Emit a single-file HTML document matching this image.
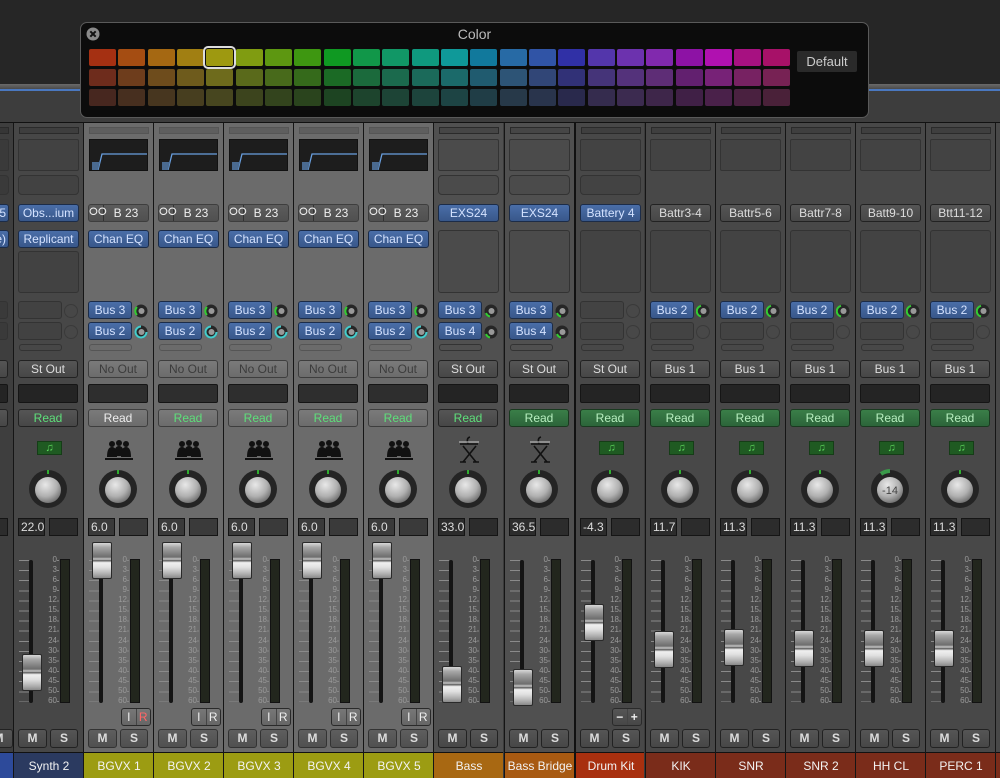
<!DOCTYPE html>
<html><head><meta charset="utf-8"><style>
*{box-sizing:border-box;margin:0;padding:0}
body{width:1000px;height:778px;overflow:hidden;background:#3b3b3b;font-family:"Liberation Sans",sans-serif;position:relative}
.top{position:absolute;left:0;top:0;width:1000px;height:84px;background:#262626}
.band{position:absolute;left:0;top:84px;width:1000px;height:39px;background:#3d3d3d;border-bottom:1px solid #111}
.band:before{content:"";position:absolute;left:0;top:0;width:100%;height:5px;background:linear-gradient(#6a6a6a,#4a4a4a)}
.band:after{content:"";position:absolute;left:0;top:5px;width:100%;height:2px;background:#4a78c0}
.st{position:absolute;top:123px;width:70px;height:655px;border-left:1px solid #151515;overflow:hidden}
.st>*{position:absolute}
.slot{left:5px;top:4px;width:60px;height:7px;border:1px solid #2a2a2a;background:rgba(0,0,0,.12)}
.eq{left:5px;top:16px;width:59px;height:32px;background:#1d1d1d;border:1px solid #111}
.eb{left:4px;top:16px;width:61px;height:32px;border:1px solid #333;border-radius:2px;background:rgba(0,0,0,.06)}
.mb{left:4px;top:52px;width:61px;height:20px;border:1px solid #333;border-radius:4px;background:rgba(0,0,0,.06)}
.ia{left:4px;top:128px;width:61px;height:42px;border:1px solid #333;border-radius:3px;background:rgba(0,0,0,.06)}
.ia2{left:4px;top:107px;width:61px;height:63px;border:1px solid #333;border-radius:3px;background:rgba(0,0,0,.06)}
.b{height:18px;border-radius:3px;font-size:12px;line-height:16px;text-align:center;white-space:nowrap;overflow:hidden;border:1px solid #222;background:linear-gradient(#555,#474747);color:#ddd}
.bl{background:linear-gradient(#4a6ea8,#38578a);color:#d4e2ff;border-color:#1c2c48}
.lt .b{background:linear-gradient(#7a7a7a,#6c6c6c);border-color:#3e3e3e;color:#3c3c3c}
.lt .bl{background:linear-gradient(#4a6ea8,#38578a);color:#d4e2ff;border-color:#1c2c48}
.in{left:4px;top:81px;width:61px}
.ins{left:4px;top:107px;width:61px}
.s1{left:4px;top:178px;width:44px}
.s2{left:4px;top:199px;width:44px}
.se{border:1px solid #333;border-radius:3px;background:rgba(0,0,0,.06);height:18px;width:44px;left:4px}
.sk1{left:50px;top:181px}.sk2{left:50px;top:202px}
.ssl{left:5px;top:221px;width:43px;height:7px;border:1px solid #333;border-radius:3px}
.out{left:4px;top:237px;width:60px}
.grp{left:4px;top:261px;width:60px;height:19px;background:#242424;border:1px solid #151515;border-radius:2px}
.lt .grp{background:#2e2e2e}
.rd{left:4px;top:286px;width:60px;color:#5ee07a!important}
.rw{left:4px;top:286px;width:60px;color:#eee!important}
.rf{left:4px;top:286px;width:60px;background:linear-gradient(#3a7e48,#2c653a)!important;color:#b8f0c0!important;border-color:#1a3a20!important}
.note{left:23px;top:318px;width:25px;height:14px;background:#1f5a22;border:1px solid #153d17;color:#5cd65c;font-size:11px;line-height:12px;text-align:center}
.kn{left:14px;top:346px}
.v1{left:4px;top:395px;width:27px;height:18px;background:#2c2c2c;border:1px solid #151515;color:#ddd;font-size:12px;line-height:16px;padding-left:2px}
.v2{left:35px;top:395px;width:29px;height:18px;background:#2c2c2c;border:1px solid #151515}
.lt .v1,.lt .v2{background:#3a3a3a}
.tk{left:5px;top:437px;width:10px;height:142px;background:repeating-linear-gradient(#8a8a8a 0 1px,transparent 1px 10.1px)}
.tk2{left:11px;top:442px;width:4px;height:142px;background:repeating-linear-gradient(#777 0 1px,transparent 1px 5px)}
.tr{left:15px;top:437px;width:4px;height:143px;background:#141414;border-radius:2px}
.sc{left:27px;top:432px;width:16px;font-size:8px;line-height:10.07px;text-align:right;color:#9a9a9a}
.sct{left:43px;top:437px;width:2px;height:142px;background:repeating-linear-gradient(#888 0 1px,transparent 1px 10.07px)}
.mt{left:46px;top:436px;width:10px;height:144px;background:#22261d;border:1px solid #121212}
.cap{left:8px;width:20px;height:37px;border-radius:2px;background:linear-gradient(#d8d8d8 0%,#a8a8a8 12%,#8c8c8c 25%,#6e6e6e 40%,#c8c8c8 46%,#5a5a5a 50%,#f0f0f0 56%,#e0e0e0 70%,#b0b0b0 88%,#8a8a8a 100%);border:1px solid #2a2a2a}
.ir{left:37px;top:585px;width:30px;height:18px;border-radius:3px;border:1px solid #2a2a2a;background:linear-gradient(#777,#666);font-size:12px;line-height:16px;color:#222;display:flex}
.ir span{flex:1;text-align:center;color:#eee}
.ir span+span{border-left:1px solid #444}
.m{left:4px;top:606px;width:29px;height:19px;font-size:12px;line-height:17px;font-weight:bold}
.sb{left:36px;top:606px;width:28px;height:19px;font-size:12px;line-height:17px;font-weight:bold}
.lt .m,.lt .sb{background:linear-gradient(#5e5e5e,#505050);color:#ddd;border-color:#333}
.nm{left:0;top:629px;width:70px;height:26px;color:#f2f2f2;font-size:12px;line-height:26px;text-align:center;border-top:1px solid #111}
.pop{position:absolute;left:80px;top:22px;width:789px;height:96px;background:#0c0c0c;border:1px solid #5a5a5a;border-radius:7px;z-index:5}
.pop .t{position:absolute;left:0;width:100%;top:3px;text-align:center;color:#bbb;font-size:14px}
.sw{position:absolute;width:27px;height:17px;border-radius:2px}
.def{position:absolute;left:716px;top:28px;width:60px;height:21px;background:#2a2a2a;color:#ccc;font-size:13px;line-height:21px;text-align:center;border-radius:2px}
</style></head><body>
<svg width="0" height="0" style="position:absolute"><defs>
<radialGradient id="kg" cx="40%" cy="30%" r="75%"><stop offset="0" stop-color="#e8e8e8"/><stop offset=".6" stop-color="#b0b0b0"/><stop offset="1" stop-color="#6a6a6a"/></radialGradient>
</defs></svg>
<div class="top"></div><div class="band"></div>

<div class="pop">
<div class="t">Color</div>
<svg style="position:absolute;left:5px;top:4px" width="14" height="14"><circle cx="7" cy="7" r="6.5" fill="#8a8a8a"/><path d="M4.3 4.3L9.7 9.7M9.7 4.3L4.3 9.7" stroke="#111" stroke-width="2"/></svg>
<div id="sws"></div>
<div class="def">Default</div>
</div>

<!-- partial strip -->
<div class="st" style="left:-57px;background:#3e3e3e">
<div class="slot"></div><div class="eb"></div><div class="mb"></div>
<div class="b bl in" style="text-align:right;padding-right:2px">EXS25</div>
<div class="b bl ins" style="text-align:right;padding-right:2px">Sculpture)</div>
<div class="se" style="top:178px;left:20px"></div><div class="se" style="top:199px;left:20px"></div>
<div class="b out">St Out</div><div class="grp"></div><div class="b rd">Read</div>
<div class="v1"></div><div class="v2"></div><div class="mt"></div>
<div class="b m" style="left:40px">M</div>
<div class="nm" style="background:#2d4a9a"></div>
</div>

<!-- Synth 2 -->
<div class="st" style="left:13px;background:#474747">
<div class="slot"></div><div class="eb"></div><div class="mb"></div>
<div class="b bl in">Obs...ium</div><div class="b bl ins">Replicant</div><div class="ia"></div>
<div class="se" style="top:178px"></div><div class="se" style="top:199px"></div>
<svg class="sk1" width="14" height="14"><circle cx="7" cy="7" r="6.5" fill="none" stroke="#3a3a3a"/></svg>
<svg class="sk2" width="14" height="14"><circle cx="7" cy="7" r="6.5" fill="none" stroke="#3a3a3a"/></svg>
<div class="ssl"></div>
<div class="b out">St Out</div><div class="grp"></div><div class="b rd">Read</div>
<div class="note">♫</div>
<svg class="kn" width="40" height="40"><circle cx="20" cy="20" r="19" fill="#242424"/><circle cx="20" cy="21" r="13" fill="url(#kg)"/><line x1="20" y1="1" x2="20" y2="5" stroke="#3d3" stroke-width="1.5"/></svg>
<div class="v1">22.0</div><div class="v2"></div>
<div class="tk"></div><div class="tr"></div>
<div class="sc">0<br>3<br>6<br>9<br>12<br>15<br>18<br>21<br>24<br>30<br>35<br>40<br>45<br>50<br>60</div>
<div class="sct"></div><div class="mt"></div><div class="cap" style="top:531px"></div>
<div class="b m">M</div><div class="b sb">S</div>
<div class="nm" style="background:#2b3a60">Synth 2</div>
</div>

<!-- BGVX 1-5 -->
<div class="st lt" style="left:83px;background:#6b6b6b">
<div class="slot" style="border-color:#555"></div>
<svg class="eq" width="59" height="32"><path d="M2 30 L8 30 L12 14 L57 14" fill="none" stroke="#6aa0e0" stroke-width="1.3"/><path d="M2 30 L2 22 L10 22 L8 30Z" fill="#4a6a90"/></svg>
<div class="b in" style="display:flex;padding:0;background:linear-gradient(#5c5c5c,#505050);color:#eee"><span style="width:15px;border-right:1px solid #333;font-size:10px">ⵔⵔ</span><span style="flex:1">B 23</span></div>
<div class="b bl ins">Chan EQ</div>
<div class="b bl s1">Bus 3</div><div class="b bl s2">Bus 2</div>
<svg class="sk1" width="14" height="14"><circle cx="7" cy="7" r="6.5" fill="#262626"/><path d="M3 11A5.5 5.5 0 0 1 3 3" fill="none" stroke="#3c3" stroke-width="2"/><circle cx="7.5" cy="7" r="3" fill="#999"/></svg>
<svg class="sk2" width="14" height="14"><circle cx="7" cy="7" r="6.5" fill="#262626"/><path d="M7 1.5A5.5 5.5 0 1 0 12.5 7" fill="none" stroke="#4cc" stroke-width="2"/><circle cx="7.5" cy="7" r="3" fill="#999"/></svg>
<div class="ssl" style="border-color:#555"></div>
<div class="b out">No Out</div><div class="grp"></div><div class="b rw">Read</div>
<svg style="left:20px;top:316px" width="30" height="24"><g fill="#111"><circle cx="8" cy="5" r="3"/><circle cx="15" cy="4" r="3"/><circle cx="22" cy="5" r="3"/><path d="M3 18 Q3 8 8 8 Q13 8 13 18Z M10 17 Q10 7 15 7 Q20 7 20 17Z M17 18 Q17 8 22 8 Q27 8 27 18Z"/><rect x="1" y="19" width="28" height="2"/></g></svg>
<svg class="kn" width="40" height="40"><circle cx="20" cy="20" r="19" fill="#242424"/><circle cx="20" cy="21" r="13" fill="url(#kg)"/><line x1="20" y1="1" x2="20" y2="5" stroke="#3d3" stroke-width="1.5"/></svg>
<div class="v1">6.0</div><div class="v2"></div>
<div class="tk"></div><div class="tr"></div>
<div class="sc">0<br>3<br>6<br>9<br>12<br>15<br>18<br>21<br>24<br>30<br>35<br>40<br>45<br>50<br>60</div>
<div class="sct"></div><div class="mt"></div><div class="cap" style="top:419px"></div>
<div class="ir"><span>I</span><span style="color:#f66">R</span></div>
<div class="b m">M</div><div class="b sb">S</div>
<div class="nm" style="background:#9c9c12">BGVX 1</div>
</div>

<div class="st lt" style="left:153px;background:#6b6b6b">
<div class="slot" style="border-color:#555"></div>
<svg class="eq" width="59" height="32"><path d="M2 30 L8 30 L12 14 L57 14" fill="none" stroke="#6aa0e0" stroke-width="1.3"/><path d="M2 30 L2 22 L10 22 L8 30Z" fill="#4a6a90"/></svg>
<div class="b in" style="display:flex;padding:0;background:linear-gradient(#5c5c5c,#505050);color:#eee"><span style="width:15px;border-right:1px solid #333;font-size:10px">ⵔⵔ</span><span style="flex:1">B 23</span></div>
<div class="b bl ins">Chan EQ</div>
<div class="b bl s1">Bus 3</div><div class="b bl s2">Bus 2</div>
<svg class="sk1" width="14" height="14"><circle cx="7" cy="7" r="6.5" fill="#262626"/><path d="M3 11A5.5 5.5 0 0 1 3 3" fill="none" stroke="#3c3" stroke-width="2"/><circle cx="7.5" cy="7" r="3" fill="#999"/></svg>
<svg class="sk2" width="14" height="14"><circle cx="7" cy="7" r="6.5" fill="#262626"/><path d="M7 1.5A5.5 5.5 0 1 0 12.5 7" fill="none" stroke="#4cc" stroke-width="2"/><circle cx="7.5" cy="7" r="3" fill="#999"/></svg>
<div class="ssl" style="border-color:#555"></div>
<div class="b out">No Out</div><div class="grp"></div><div class="b rd">Read</div>
<svg style="left:20px;top:316px" width="30" height="24"><g fill="#111"><circle cx="8" cy="5" r="3"/><circle cx="15" cy="4" r="3"/><circle cx="22" cy="5" r="3"/><path d="M3 18 Q3 8 8 8 Q13 8 13 18Z M10 17 Q10 7 15 7 Q20 7 20 17Z M17 18 Q17 8 22 8 Q27 8 27 18Z"/><rect x="1" y="19" width="28" height="2"/></g></svg>
<svg class="kn" width="40" height="40"><circle cx="20" cy="20" r="19" fill="#242424"/><circle cx="20" cy="21" r="13" fill="url(#kg)"/><line x1="20" y1="1" x2="20" y2="5" stroke="#3d3" stroke-width="1.5"/></svg>
<div class="v1">6.0</div><div class="v2"></div>
<div class="tk"></div><div class="tr"></div>
<div class="sc">0<br>3<br>6<br>9<br>12<br>15<br>18<br>21<br>24<br>30<br>35<br>40<br>45<br>50<br>60</div>
<div class="sct"></div><div class="mt"></div><div class="cap" style="top:419px"></div>
<div class="ir"><span>I</span><span>R</span></div>
<div class="b m">M</div><div class="b sb">S</div>
<div class="nm" style="background:#9c9c12">BGVX 2</div>
</div>

<div class="st lt" style="left:223px;background:#6b6b6b">
<div class="slot" style="border-color:#555"></div>
<svg class="eq" width="59" height="32"><path d="M2 30 L8 30 L12 14 L57 14" fill="none" stroke="#6aa0e0" stroke-width="1.3"/><path d="M2 30 L2 22 L10 22 L8 30Z" fill="#4a6a90"/></svg>
<div class="b in" style="display:flex;padding:0;background:linear-gradient(#5c5c5c,#505050);color:#eee"><span style="width:15px;border-right:1px solid #333;font-size:10px">ⵔⵔ</span><span style="flex:1">B 23</span></div>
<div class="b bl ins">Chan EQ</div>
<div class="b bl s1">Bus 3</div><div class="b bl s2">Bus 2</div>
<svg class="sk1" width="14" height="14"><circle cx="7" cy="7" r="6.5" fill="#262626"/><path d="M3 11A5.5 5.5 0 0 1 3 3" fill="none" stroke="#3c3" stroke-width="2"/><circle cx="7.5" cy="7" r="3" fill="#999"/></svg>
<svg class="sk2" width="14" height="14"><circle cx="7" cy="7" r="6.5" fill="#262626"/><path d="M7 1.5A5.5 5.5 0 1 0 12.5 7" fill="none" stroke="#4cc" stroke-width="2"/><circle cx="7.5" cy="7" r="3" fill="#999"/></svg>
<div class="ssl" style="border-color:#555"></div>
<div class="b out">No Out</div><div class="grp"></div><div class="b rd">Read</div>
<svg style="left:20px;top:316px" width="30" height="24"><g fill="#111"><circle cx="8" cy="5" r="3"/><circle cx="15" cy="4" r="3"/><circle cx="22" cy="5" r="3"/><path d="M3 18 Q3 8 8 8 Q13 8 13 18Z M10 17 Q10 7 15 7 Q20 7 20 17Z M17 18 Q17 8 22 8 Q27 8 27 18Z"/><rect x="1" y="19" width="28" height="2"/></g></svg>
<svg class="kn" width="40" height="40"><circle cx="20" cy="20" r="19" fill="#242424"/><circle cx="20" cy="21" r="13" fill="url(#kg)"/><line x1="20" y1="1" x2="20" y2="5" stroke="#3d3" stroke-width="1.5"/></svg>
<div class="v1">6.0</div><div class="v2"></div>
<div class="tk"></div><div class="tr"></div>
<div class="sc">0<br>3<br>6<br>9<br>12<br>15<br>18<br>21<br>24<br>30<br>35<br>40<br>45<br>50<br>60</div>
<div class="sct"></div><div class="mt"></div><div class="cap" style="top:419px"></div>
<div class="ir"><span>I</span><span>R</span></div>
<div class="b m">M</div><div class="b sb">S</div>
<div class="nm" style="background:#9c9c12">BGVX 3</div>
</div>

<div class="st lt" style="left:293px;background:#6b6b6b">
<div class="slot" style="border-color:#555"></div>
<svg class="eq" width="59" height="32"><path d="M2 30 L8 30 L12 14 L57 14" fill="none" stroke="#6aa0e0" stroke-width="1.3"/><path d="M2 30 L2 22 L10 22 L8 30Z" fill="#4a6a90"/></svg>
<div class="b in" style="display:flex;padding:0;background:linear-gradient(#5c5c5c,#505050);color:#eee"><span style="width:15px;border-right:1px solid #333;font-size:10px">ⵔⵔ</span><span style="flex:1">B 23</span></div>
<div class="b bl ins">Chan EQ</div>
<div class="b bl s1">Bus 3</div><div class="b bl s2">Bus 2</div>
<svg class="sk1" width="14" height="14"><circle cx="7" cy="7" r="6.5" fill="#262626"/><path d="M3 11A5.5 5.5 0 0 1 3 3" fill="none" stroke="#3c3" stroke-width="2"/><circle cx="7.5" cy="7" r="3" fill="#999"/></svg>
<svg class="sk2" width="14" height="14"><circle cx="7" cy="7" r="6.5" fill="#262626"/><path d="M7 1.5A5.5 5.5 0 1 0 12.5 7" fill="none" stroke="#4cc" stroke-width="2"/><circle cx="7.5" cy="7" r="3" fill="#999"/></svg>
<div class="ssl" style="border-color:#555"></div>
<div class="b out">No Out</div><div class="grp"></div><div class="b rd">Read</div>
<svg style="left:20px;top:316px" width="30" height="24"><g fill="#111"><circle cx="8" cy="5" r="3"/><circle cx="15" cy="4" r="3"/><circle cx="22" cy="5" r="3"/><path d="M3 18 Q3 8 8 8 Q13 8 13 18Z M10 17 Q10 7 15 7 Q20 7 20 17Z M17 18 Q17 8 22 8 Q27 8 27 18Z"/><rect x="1" y="19" width="28" height="2"/></g></svg>
<svg class="kn" width="40" height="40"><circle cx="20" cy="20" r="19" fill="#242424"/><circle cx="20" cy="21" r="13" fill="url(#kg)"/><line x1="20" y1="1" x2="20" y2="5" stroke="#3d3" stroke-width="1.5"/></svg>
<div class="v1">6.0</div><div class="v2"></div>
<div class="tk"></div><div class="tr"></div>
<div class="sc">0<br>3<br>6<br>9<br>12<br>15<br>18<br>21<br>24<br>30<br>35<br>40<br>45<br>50<br>60</div>
<div class="sct"></div><div class="mt"></div><div class="cap" style="top:419px"></div>
<div class="ir"><span>I</span><span>R</span></div>
<div class="b m">M</div><div class="b sb">S</div>
<div class="nm" style="background:#9c9c12">BGVX 4</div>
</div>

<div class="st lt" style="left:363px;background:#6b6b6b">
<div class="slot" style="border-color:#555"></div>
<svg class="eq" width="59" height="32"><path d="M2 30 L8 30 L12 14 L57 14" fill="none" stroke="#6aa0e0" stroke-width="1.3"/><path d="M2 30 L2 22 L10 22 L8 30Z" fill="#4a6a90"/></svg>
<div class="b in" style="display:flex;padding:0;background:linear-gradient(#5c5c5c,#505050);color:#eee"><span style="width:15px;border-right:1px solid #333;font-size:10px">ⵔⵔ</span><span style="flex:1">B 23</span></div>
<div class="b bl ins">Chan EQ</div>
<div class="b bl s1">Bus 3</div><div class="b bl s2">Bus 2</div>
<svg class="sk1" width="14" height="14"><circle cx="7" cy="7" r="6.5" fill="#262626"/><path d="M3 11A5.5 5.5 0 0 1 3 3" fill="none" stroke="#3c3" stroke-width="2"/><circle cx="7.5" cy="7" r="3" fill="#999"/></svg>
<svg class="sk2" width="14" height="14"><circle cx="7" cy="7" r="6.5" fill="#262626"/><path d="M7 1.5A5.5 5.5 0 1 0 12.5 7" fill="none" stroke="#4cc" stroke-width="2"/><circle cx="7.5" cy="7" r="3" fill="#999"/></svg>
<div class="ssl" style="border-color:#555"></div>
<div class="b out">No Out</div><div class="grp"></div><div class="b rd">Read</div>
<svg style="left:20px;top:316px" width="30" height="24"><g fill="#111"><circle cx="8" cy="5" r="3"/><circle cx="15" cy="4" r="3"/><circle cx="22" cy="5" r="3"/><path d="M3 18 Q3 8 8 8 Q13 8 13 18Z M10 17 Q10 7 15 7 Q20 7 20 17Z M17 18 Q17 8 22 8 Q27 8 27 18Z"/><rect x="1" y="19" width="28" height="2"/></g></svg>
<svg class="kn" width="40" height="40"><circle cx="20" cy="20" r="19" fill="#242424"/><circle cx="20" cy="21" r="13" fill="url(#kg)"/><line x1="20" y1="1" x2="20" y2="5" stroke="#3d3" stroke-width="1.5"/></svg>
<div class="v1">6.0</div><div class="v2"></div>
<div class="tk"></div><div class="tr"></div>
<div class="sc">0<br>3<br>6<br>9<br>12<br>15<br>18<br>21<br>24<br>30<br>35<br>40<br>45<br>50<br>60</div>
<div class="sct"></div><div class="mt"></div><div class="cap" style="top:419px"></div>
<div class="ir"><span>I</span><span>R</span></div>
<div class="b m">M</div><div class="b sb">S</div>
<div class="nm" style="background:#9c9c12">BGVX 5</div>
</div>

<!-- Bass -->
<div class="st" style="left:433px;background:#505050">
<div class="slot"></div><div class="eb"></div><div class="mb"></div>
<div class="b bl in">EXS24</div><div class="ia2"></div>
<div class="b bl s1">Bus 3</div><div class="b bl s2">Bus 4</div>
<svg class="sk1" width="14" height="14"><circle cx="7" cy="7" r="6.5" fill="#262626"/><path d="M2 9A5.5 5.5 0 0 0 6 12.5" fill="none" stroke="#3c3" stroke-width="2"/><circle cx="7.5" cy="7" r="3" fill="#999"/></svg>
<svg class="sk2" width="14" height="14"><circle cx="7" cy="7" r="6.5" fill="#262626"/><path d="M2 9A5.5 5.5 0 0 0 6 12.5" fill="none" stroke="#3c3" stroke-width="2"/><circle cx="7.5" cy="7" r="3" fill="#999"/></svg>
<div class="ssl"></div>
<div class="b out">St Out</div><div class="grp"></div><div class="b rd">Read</div>
<svg style="left:22px;top:312px" width="26" height="30"><g stroke="#111" fill="none" stroke-width="1.6"><path d="M4 9 L22 9"/><path d="M7 11 L20 27 M20 11 L7 27"/><path d="M4 27 L10 27 M17 27 L23 27"/><path d="M12 9 Q10 3 14 2"/></g><path d="M3 7 L23 7" stroke="#ccc" stroke-width="1"/></svg>
<svg class="kn" width="40" height="40"><circle cx="20" cy="20" r="19" fill="#242424"/><circle cx="20" cy="21" r="13" fill="url(#kg)"/><line x1="20" y1="1" x2="20" y2="5" stroke="#3d3" stroke-width="1.5"/></svg>
<div class="v1">33.0</div><div class="v2"></div>
<div class="tk"></div><div class="tr"></div>
<div class="sc">0<br>3<br>6<br>9<br>12<br>15<br>18<br>21<br>24<br>30<br>35<br>40<br>45<br>50<br>60</div>
<div class="sct"></div><div class="mt"></div><div class="cap" style="top:543px"></div>
<div class="b m">M</div><div class="b sb">S</div>
<div class="nm" style="background:#a86812">Bass</div>
</div>

<div class="st" style="left:504px;background:#505050">
<div class="slot"></div><div class="eb"></div><div class="mb"></div>
<div class="b bl in">EXS24</div><div class="ia2"></div>
<div class="b bl s1">Bus 3</div><div class="b bl s2">Bus 4</div>
<svg class="sk1" width="14" height="14"><circle cx="7" cy="7" r="6.5" fill="#262626"/><path d="M2 9A5.5 5.5 0 0 0 6 12.5" fill="none" stroke="#3c3" stroke-width="2"/><circle cx="7.5" cy="7" r="3" fill="#999"/></svg>
<svg class="sk2" width="14" height="14"><circle cx="7" cy="7" r="6.5" fill="#262626"/><path d="M2 9A5.5 5.5 0 0 0 6 12.5" fill="none" stroke="#3c3" stroke-width="2"/><circle cx="7.5" cy="7" r="3" fill="#999"/></svg>
<div class="ssl"></div>
<div class="b out">St Out</div><div class="grp"></div><div class="b rf">Read</div>
<svg style="left:22px;top:312px" width="26" height="30"><g stroke="#111" fill="none" stroke-width="1.6"><path d="M4 9 L22 9"/><path d="M7 11 L20 27 M20 11 L7 27"/><path d="M4 27 L10 27 M17 27 L23 27"/><path d="M12 9 Q10 3 14 2"/></g><path d="M3 7 L23 7" stroke="#ccc" stroke-width="1"/></svg>
<svg class="kn" width="40" height="40"><circle cx="20" cy="20" r="19" fill="#242424"/><circle cx="20" cy="21" r="13" fill="url(#kg)"/><line x1="20" y1="1" x2="20" y2="5" stroke="#3d3" stroke-width="1.5"/></svg>
<div class="v1">36.5</div><div class="v2"></div>
<div class="tk"></div><div class="tr"></div>
<div class="sc">0<br>3<br>6<br>9<br>12<br>15<br>18<br>21<br>24<br>30<br>35<br>40<br>45<br>50<br>60</div>
<div class="sct"></div><div class="mt"></div><div class="cap" style="top:546px"></div>
<div class="b m">M</div><div class="b sb">S</div>
<div class="nm" style="background:#a85a12">Bass Bridge</div>
</div>

<!-- Drum Kit -->
<div class="st" style="left:574px;background:#484848;border-left:2px solid #111">
<div class="slot"></div><div class="eb"></div><div class="mb"></div>
<div class="b bl in">Battery 4</div><div class="ia2"></div>
<div class="se" style="top:178px"></div><div class="se" style="top:199px"></div>
<svg class="sk1" width="14" height="14"><circle cx="7" cy="7" r="6.5" fill="none" stroke="#3a3a3a"/></svg>
<svg class="sk2" width="14" height="14"><circle cx="7" cy="7" r="6.5" fill="none" stroke="#3a3a3a"/></svg>
<div class="ssl"></div>
<div class="b out">St Out</div><div class="grp"></div><div class="b rf">Read</div>
<div class="note">♫</div>
<svg class="kn" width="40" height="40"><circle cx="20" cy="20" r="19" fill="#242424"/><circle cx="20" cy="21" r="13" fill="url(#kg)"/><line x1="20" y1="1" x2="20" y2="5" stroke="#3d3" stroke-width="1.5"/></svg>
<div class="v1">-4.3</div><div class="v2"></div>
<div class="tk"></div><div class="tr"></div>
<div class="sc">0<br>3<br>6<br>9<br>12<br>15<br>18<br>21<br>24<br>30<br>35<br>40<br>45<br>50<br>60</div>
<div class="sct"></div><div class="mt"></div><div class="cap" style="top:481px"></div>
<div class="ir" style="left:36px;background:linear-gradient(#555,#474747)"><span style="font-weight:bold">−</span><span style="font-weight:bold">+</span></div>
<div class="b m">M</div><div class="b sb">S</div>
<div class="nm" style="background:#a8300f">Drum Kit</div>
</div>

<!-- KIK etc -->
<div class="st" style="left:645px;background:#484848">
<div class="slot"></div><div class="eb"></div>
<div class="b in">Battr3-4</div><div class="ia2"></div>
<div class="b bl s1">Bus 2</div><div class="se" style="top:199px"></div>
<svg class="sk1" width="14" height="14"><circle cx="7" cy="7" r="6.5" fill="#262626"/><path d="M5 12.5A5.5 5.5 0 0 1 5 1.8" fill="none" stroke="#3c3" stroke-width="2"/><circle cx="7.5" cy="7" r="3" fill="#999"/></svg>
<svg class="sk2" width="14" height="14"><circle cx="7" cy="7" r="6.5" fill="none" stroke="#3a3a3a"/></svg>
<div class="ssl"></div>
<div class="b out">Bus 1</div><div class="grp"></div><div class="b rf">Read</div>
<div class="note">♫</div>
<svg class="kn" width="40" height="40"><circle cx="20" cy="20" r="19" fill="#242424"/><circle cx="20" cy="21" r="13" fill="url(#kg)"/><line x1="20" y1="1" x2="20" y2="5" stroke="#3d3" stroke-width="1.5"/></svg>
<div class="v1">11.7</div><div class="v2"></div>
<div class="tk"></div><div class="tr"></div>
<div class="sc">0<br>3<br>6<br>9<br>12<br>15<br>18<br>21<br>24<br>30<br>35<br>40<br>45<br>50<br>60</div>
<div class="sct"></div><div class="mt"></div><div class="cap" style="top:508px"></div>
<div class="b m">M</div><div class="b sb">S</div>
<div class="nm" style="background:#7a2c1a">KIK</div>
</div>

<div class="st" style="left:715px;background:#484848">
<div class="slot"></div><div class="eb"></div>
<div class="b in">Battr5-6</div><div class="ia2"></div>
<div class="b bl s1">Bus 2</div><div class="se" style="top:199px"></div>
<svg class="sk1" width="14" height="14"><circle cx="7" cy="7" r="6.5" fill="#262626"/><path d="M5 12.5A5.5 5.5 0 0 1 5 1.8" fill="none" stroke="#3c3" stroke-width="2"/><circle cx="7.5" cy="7" r="3" fill="#999"/></svg>
<svg class="sk2" width="14" height="14"><circle cx="7" cy="7" r="6.5" fill="none" stroke="#3a3a3a"/></svg>
<div class="ssl"></div>
<div class="b out">Bus 1</div><div class="grp"></div><div class="b rf">Read</div>
<div class="note">♫</div>
<svg class="kn" width="40" height="40"><circle cx="20" cy="20" r="19" fill="#242424"/><circle cx="20" cy="21" r="13" fill="url(#kg)"/><line x1="20" y1="1" x2="20" y2="5" stroke="#3d3" stroke-width="1.5"/></svg>
<div class="v1">11.3</div><div class="v2"></div>
<div class="tk"></div><div class="tr"></div>
<div class="sc">0<br>3<br>6<br>9<br>12<br>15<br>18<br>21<br>24<br>30<br>35<br>40<br>45<br>50<br>60</div>
<div class="sct"></div><div class="mt"></div><div class="cap" style="top:506px"></div>
<div class="b m">M</div><div class="b sb">S</div>
<div class="nm" style="background:#7a2c1a">SNR</div>
</div>

<div class="st" style="left:785px;background:#484848">
<div class="slot"></div><div class="eb"></div>
<div class="b in">Battr7-8</div><div class="ia2"></div>
<div class="b bl s1">Bus 2</div><div class="se" style="top:199px"></div>
<svg class="sk1" width="14" height="14"><circle cx="7" cy="7" r="6.5" fill="#262626"/><path d="M5 12.5A5.5 5.5 0 0 1 5 1.8" fill="none" stroke="#3c3" stroke-width="2"/><circle cx="7.5" cy="7" r="3" fill="#999"/></svg>
<svg class="sk2" width="14" height="14"><circle cx="7" cy="7" r="6.5" fill="none" stroke="#3a3a3a"/></svg>
<div class="ssl"></div>
<div class="b out">Bus 1</div><div class="grp"></div><div class="b rf">Read</div>
<div class="note">♫</div>
<svg class="kn" width="40" height="40"><circle cx="20" cy="20" r="19" fill="#242424"/><circle cx="20" cy="21" r="13" fill="url(#kg)"/><line x1="20" y1="1" x2="20" y2="5" stroke="#3d3" stroke-width="1.5"/></svg>
<div class="v1">11.3</div><div class="v2"></div>
<div class="tk"></div><div class="tr"></div>
<div class="sc">0<br>3<br>6<br>9<br>12<br>15<br>18<br>21<br>24<br>30<br>35<br>40<br>45<br>50<br>60</div>
<div class="sct"></div><div class="mt"></div><div class="cap" style="top:507px"></div>
<div class="b m">M</div><div class="b sb">S</div>
<div class="nm" style="background:#7a2c1a">SNR 2</div>
</div>

<div class="st" style="left:855px;background:#484848">
<div class="slot"></div><div class="eb"></div>
<div class="b in">Batt9-10</div><div class="ia2"></div>
<div class="b bl s1">Bus 2</div><div class="se" style="top:199px"></div>
<svg class="sk1" width="14" height="14"><circle cx="7" cy="7" r="6.5" fill="#262626"/><path d="M5 12.5A5.5 5.5 0 0 1 5 1.8" fill="none" stroke="#3c3" stroke-width="2"/><circle cx="7.5" cy="7" r="3" fill="#999"/></svg>
<svg class="sk2" width="14" height="14"><circle cx="7" cy="7" r="6.5" fill="none" stroke="#3a3a3a"/></svg>
<div class="ssl"></div>
<div class="b out">Bus 1</div><div class="grp"></div><div class="b rf">Read</div>
<div class="note">♫</div>
<svg class="kn" width="40" height="40"><circle cx="20" cy="20" r="19" fill="#242424"/><path d="M11 5 A16 16 0 0 1 20 2" stroke="#3a9a4a" stroke-width="4" fill="none"/><circle cx="20" cy="21" r="13" fill="url(#kg)"/><text x="20" y="25" font-size="11" text-anchor="middle" fill="#444" font-family="Liberation Sans">-14</text></svg>
<div class="v1">11.3</div><div class="v2"></div>
<div class="tk"></div><div class="tr"></div>
<div class="sc">0<br>3<br>6<br>9<br>12<br>15<br>18<br>21<br>24<br>30<br>35<br>40<br>45<br>50<br>60</div>
<div class="sct"></div><div class="mt"></div><div class="cap" style="top:507px"></div>
<div class="b m">M</div><div class="b sb">S</div>
<div class="nm" style="background:#7a2c1a">HH CL</div>
</div>

<div class="st" style="left:925px;background:#484848">
<div class="slot"></div><div class="eb"></div>
<div class="b in">Btt11-12</div><div class="ia2"></div>
<div class="b bl s1">Bus 2</div><div class="se" style="top:199px"></div>
<svg class="sk1" width="14" height="14"><circle cx="7" cy="7" r="6.5" fill="#262626"/><path d="M5 12.5A5.5 5.5 0 0 1 5 1.8" fill="none" stroke="#3c3" stroke-width="2"/><circle cx="7.5" cy="7" r="3" fill="#999"/></svg>
<svg class="sk2" width="14" height="14"><circle cx="7" cy="7" r="6.5" fill="none" stroke="#3a3a3a"/></svg>
<div class="ssl"></div>
<div class="b out">Bus 1</div><div class="grp"></div><div class="b rf">Read</div>
<div class="note">♫</div>
<svg class="kn" width="40" height="40"><circle cx="20" cy="20" r="19" fill="#242424"/><circle cx="20" cy="21" r="13" fill="url(#kg)"/><line x1="20" y1="1" x2="20" y2="5" stroke="#3d3" stroke-width="1.5"/></svg>
<div class="v1">11.3</div><div class="v2"></div>
<div class="tk"></div><div class="tr"></div>
<div class="sc">0<br>3<br>6<br>9<br>12<br>15<br>18<br>21<br>24<br>30<br>35<br>40<br>45<br>50<br>60</div>
<div class="sct"></div><div class="mt"></div><div class="cap" style="top:507px"></div>
<div class="b m">M</div><div class="b sb">S</div>
<div class="nm" style="background:#7a2c1a">PERC 1</div>
</div>

<div class="st" style="left:995px;background:#484848">
<div class="nm" style="background:#7a2c1a"></div>
</div>

<div style="position:absolute;left:80px;top:22px;width:789px;height:96px;z-index:6">
<div class="sw" style="left:9px;top:27px;background:hsl(12,80%,36%)"></div><div class="sw" style="left:38px;top:27px;background:hsl(24,80%,36%)"></div><div class="sw" style="left:68px;top:27px;background:hsl(35,80%,36%)"></div><div class="sw" style="left:97px;top:27px;background:hsl(46,80%,35%)"></div><div class="sw" style="left:126px;top:27px;background:hsl(58,82%,34%);outline:2px solid #ddd;outline-offset:1px"></div><div class="sw" style="left:156px;top:27px;background:hsl(72,80%,34%)"></div><div class="sw" style="left:185px;top:27px;background:hsl(86,80%,33%)"></div><div class="sw" style="left:214px;top:27px;background:hsl(100,80%,33%)"></div><div class="sw" style="left:244px;top:27px;background:hsl(128,82%,33%)"></div><div class="sw" style="left:273px;top:27px;background:hsl(145,80%,33%)"></div><div class="sw" style="left:302px;top:27px;background:hsl(158,80%,33%)"></div><div class="sw" style="left:332px;top:27px;background:hsl(168,82%,33%)"></div><div class="sw" style="left:361px;top:27px;background:hsl(180,82%,33%)"></div><div class="sw" style="left:390px;top:27px;background:hsl(195,80%,34%)"></div><div class="sw" style="left:420px;top:27px;background:hsl(208,62%,40%)"></div><div class="sw" style="left:449px;top:27px;background:hsl(222,55%,42%)"></div><div class="sw" style="left:478px;top:27px;background:hsl(240,55%,42%)"></div><div class="sw" style="left:508px;top:27px;background:hsl(255,52%,44%)"></div><div class="sw" style="left:537px;top:27px;background:hsl(268,55%,44%)"></div><div class="sw" style="left:566px;top:27px;background:hsl(280,62%,42%)"></div><div class="sw" style="left:596px;top:27px;background:hsl(290,80%,36%)"></div><div class="sw" style="left:625px;top:27px;background:hsl(300,82%,38%)"></div><div class="sw" style="left:654px;top:27px;background:hsl(315,82%,36%)"></div>
<div class="sw" style="left:9px;top:47px;background:hsl(12,60%,27%)"></div><div class="sw" style="left:38px;top:47px;background:hsl(24,60%,27%)"></div><div class="sw" style="left:68px;top:47px;background:hsl(35,60%,27%)"></div><div class="sw" style="left:97px;top:47px;background:hsl(46,60%,27%)"></div><div class="sw" style="left:126px;top:47px;background:hsl(58,60%,27%)"></div><div class="sw" style="left:156px;top:47px;background:hsl(72,60%,26%)"></div><div class="sw" style="left:185px;top:47px;background:hsl(86,60%,26%)"></div><div class="sw" style="left:214px;top:47px;background:hsl(100,60%,26%)"></div><div class="sw" style="left:244px;top:47px;background:hsl(128,60%,26%)"></div><div class="sw" style="left:273px;top:47px;background:hsl(145,60%,26%)"></div><div class="sw" style="left:302px;top:47px;background:hsl(158,60%,26%)"></div><div class="sw" style="left:332px;top:47px;background:hsl(168,60%,26%)"></div><div class="sw" style="left:361px;top:47px;background:hsl(180,60%,26%)"></div><div class="sw" style="left:390px;top:47px;background:hsl(195,55%,28%)"></div><div class="sw" style="left:420px;top:47px;background:hsl(208,45%,32%)"></div><div class="sw" style="left:449px;top:47px;background:hsl(222,42%,33%)"></div><div class="sw" style="left:478px;top:47px;background:hsl(240,42%,33%)"></div><div class="sw" style="left:508px;top:47px;background:hsl(255,40%,34%)"></div><div class="sw" style="left:537px;top:47px;background:hsl(268,42%,34%)"></div><div class="sw" style="left:566px;top:47px;background:hsl(280,45%,32%)"></div><div class="sw" style="left:596px;top:47px;background:hsl(290,55%,28%)"></div><div class="sw" style="left:625px;top:47px;background:hsl(300,55%,30%)"></div><div class="sw" style="left:654px;top:47px;background:hsl(315,55%,30%)"></div>
<div class="sw" style="left:9px;top:67px;background:hsl(12,40%,20%)"></div><div class="sw" style="left:38px;top:67px;background:hsl(24,40%,20%)"></div><div class="sw" style="left:68px;top:67px;background:hsl(35,40%,20%)"></div><div class="sw" style="left:97px;top:67px;background:hsl(46,40%,20%)"></div><div class="sw" style="left:126px;top:67px;background:hsl(58,40%,20%)"></div><div class="sw" style="left:156px;top:67px;background:hsl(72,40%,19%)"></div><div class="sw" style="left:185px;top:67px;background:hsl(86,40%,19%)"></div><div class="sw" style="left:214px;top:67px;background:hsl(100,40%,19%)"></div><div class="sw" style="left:244px;top:67px;background:hsl(128,40%,19%)"></div><div class="sw" style="left:273px;top:67px;background:hsl(145,40%,19%)"></div><div class="sw" style="left:302px;top:67px;background:hsl(158,40%,19%)"></div><div class="sw" style="left:332px;top:67px;background:hsl(168,40%,19%)"></div><div class="sw" style="left:361px;top:67px;background:hsl(180,40%,19%)"></div><div class="sw" style="left:390px;top:67px;background:hsl(195,38%,20%)"></div><div class="sw" style="left:420px;top:67px;background:hsl(208,30%,22%)"></div><div class="sw" style="left:449px;top:67px;background:hsl(222,30%,23%)"></div><div class="sw" style="left:478px;top:67px;background:hsl(240,30%,23%)"></div><div class="sw" style="left:508px;top:67px;background:hsl(255,28%,24%)"></div><div class="sw" style="left:537px;top:67px;background:hsl(268,30%,24%)"></div><div class="sw" style="left:566px;top:67px;background:hsl(280,32%,22%)"></div><div class="sw" style="left:596px;top:67px;background:hsl(290,38%,20%)"></div><div class="sw" style="left:625px;top:67px;background:hsl(300,38%,21%)"></div><div class="sw" style="left:654px;top:67px;background:hsl(315,38%,21%)"></div>
<div class="sw" style="left:683px;top:27px;background:hsl(325,82%,36%)"></div><div class="sw" style="left:683px;top:47px;background:hsl(325,55%,30%)"></div><div class="sw" style="left:683px;top:67px;background:hsl(325,38%,21%)"></div>
</div>
</body></html>
